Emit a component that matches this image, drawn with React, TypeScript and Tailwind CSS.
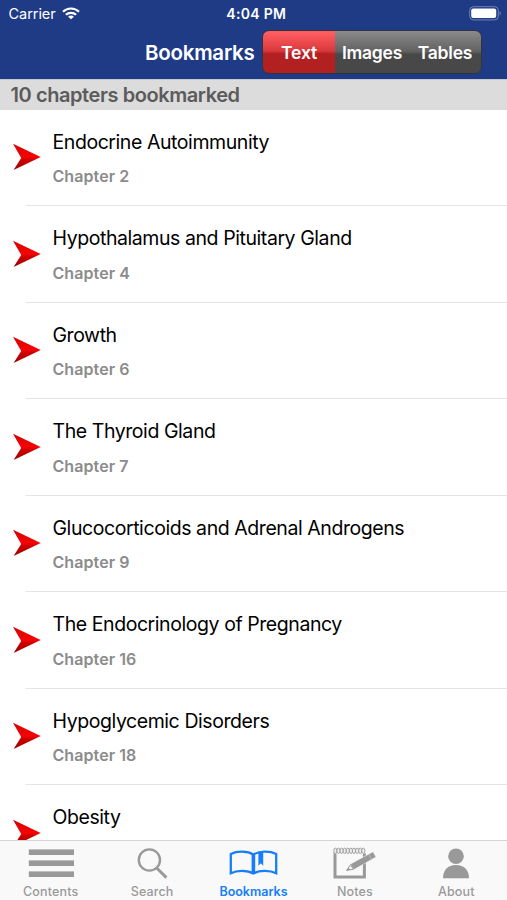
import { clsx } from "clsx";

const chapters = [
  { title: "Endocrine Autoimmunity", chapter: "Chapter 2" },
  { title: "Hypothalamus and Pituitary Gland", chapter: "Chapter 4" },
  { title: "Growth", chapter: "Chapter 6" },
  { title: "The Thyroid Gland", chapter: "Chapter 7" },
  { title: "Glucocorticoids and Adrenal Androgens", chapter: "Chapter 9" },
  { title: "The Endocrinology of Pregnancy", chapter: "Chapter 16" },
  { title: "Hypoglycemic Disorders", chapter: "Chapter 18" },
  { title: "Obesity", chapter: "" },
];

const tabs = [
  { label: "Contents", icon: ContentsIcon },
  { label: "Search", icon: SearchIcon },
  { label: "Bookmarks", icon: BookIcon, active: true },
  { label: "Notes", icon: NotesIcon },
  { label: "About", icon: PersonIcon },
];

const rings = [4, 7.1, 10.2, 13.3, 16.4, 19.5, 22.6, 25.7, 28.8, 31.9];

function WifiIcon() {
  return (
    <svg width="18" height="13" viewBox="0 0 18 13" fill="none" stroke="white" strokeWidth="2.2">
      <path d="M1 4.8C5.4 0.4 12.6 0.4 17 4.8" />
      <path d="M3.9 7.8C6.7 5.1 11.3 5.1 14.1 7.8" />
      <path d="M9 12.3L6.1 9.7C7.7 8.2 10.3 8.2 11.9 9.7Z" fill="white" stroke="none" />
    </svg>
  );
}

function BatteryIcon() {
  return (
    <svg width="33" height="15" viewBox="0 0 33 15">
      <rect x="0.7" y="0.7" width="28.6" height="13.2" rx="3.6" fill="none" stroke="#7482b5" strokeWidth="1" />
      <rect x="2.2" y="2.5" width="25" height="9.6" rx="2" fill="white" />
      <path d="M30.6 5C32.2 5.8 32.2 8.8 30.6 9.6Z" fill="#7482b5" />
    </svg>
  );
}

function ArrowIcon() {
  return (
    <svg width="30" height="28" viewBox="0 0 30 28">
      <defs>
        <linearGradient id="arrow" x1="0" y1="0" x2="0" y2="1">
          <stop offset="0" stopColor="#d90000" />
          <stop offset="0.5" stopColor="#f50505" />
          <stop offset="0.62" stopColor="#cf0000" />
          <stop offset="1" stopColor="#980000" />
        </linearGradient>
      </defs>
      <path d="M1 0.8L28.7 14L1.6 27L9.2 15Z" fill="url(#arrow)" />
    </svg>
  );
}

function ContentsIcon() {
  return (
    <svg width="48" height="34" viewBox="0 0 48 34" fill="#999">
      <rect x="2.8" y="2.4" width="45.2" height="5.6" />
      <rect x="2.8" y="13.4" width="45.2" height="5.6" />
      <rect x="2.8" y="24.4" width="45.2" height="5.6" />
    </svg>
  );
}

function SearchIcon() {
  return (
    <svg width="32" height="34" viewBox="0 0 32 34" fill="none" stroke="#999">
      <circle cx="13.4" cy="13" r="10.6" strokeWidth="2.4" />
      <path d="M20.7 21L30.4 30.6" strokeWidth="3" />
    </svg>
  );
}

function BookIcon() {
  return (
    <svg width="52" height="34" viewBox="0 0 52 34" fill="none" stroke="#157efb" strokeWidth="2.3">
      <path d="M26.4 7.6C20.5 3.8 10 3.8 3.8 7V26.2C10 23 20.5 23 26.4 26.4C32.3 23 43 23 49.2 26.2V7C43 3.8 32.3 3.8 26.4 7.6Z" />
      <path d="M26.4 7.5V26.5" strokeWidth="3.6" />
      <path d="M31.4 5.6H36.2V18.8L33.8 16.2L31.4 18.8Z" fill="#157efb" stroke="none" />
    </svg>
  );
}

function NotesIcon() {
  return (
    <svg width="46" height="34" viewBox="0 0 46 34" fill="none" stroke="#999">
      <path d="M4 5V30H33.4V4" strokeWidth="3" />
      <rect x="2.4" y="0.8" width="33" height="6" rx="2.5" fill="#f8f8f8" stroke="none" />
      {rings.map((x) => (
        <ellipse key={x} cx={x + 0.4} cy="3.8" rx="1.6" ry="2.7" strokeWidth="0.9" fill="#eee" />
      ))}
      <path d="M19.2 17.2L42 4.8L45 10L23 22.6Z" fill="#999" stroke="#f8f8f8" strokeWidth="0.5" />
      <path d="M19.4 17.8L15.6 23.4L22.6 22.2Z" strokeWidth="1" fill="#f0f0f0" />
      <path d="M15.6 23.4L17.6 20.6L19 22.8Z" fill="#999" stroke="none" />
      <path d="M37.8 7.4L40.6 12.6" stroke="#c8c8c8" strokeWidth="0.7" />
    </svg>
  );
}

function PersonIcon() {
  return (
    <svg width="28" height="34" viewBox="0 0 28 34" fill="#999">
      <circle cx="14" cy="9.2" r="7.8" />
      <path d="M1 31.2C1 23.2 5.8 18 14 18S27 23.2 27 31.2Z" />
    </svg>
  );
}

export default function App() {
  return (
    <div className="flex h-[900px] w-[507px] flex-col overflow-hidden bg-white font-['Inter','Liberation_Sans',sans-serif]">
      <header className="h-[79px] shrink-0 bg-[#203b86] text-white">
        <div className="grid h-[27px] grid-cols-3 items-center pl-[8.5px] pr-[5px]">
          <div className="flex items-center gap-[6px]">
            <span className="text-[14.5px] tracking-[-0.05px]">Carrier</span>
            <WifiIcon />
          </div>
          <span className="pl-[2px] text-center text-[14px] font-semibold tracking-[0.3px]">4:04 PM</span>
          <div className="flex justify-end">
            <BatteryIcon />
          </div>
        </div>
        <div className="flex items-start pl-[145px] pt-[3px]">
          <h1 className="w-[117px] pt-[9px] text-[20.5px] font-semibold leading-[28px] tracking-[-0.25px]">Bookmarks</h1>
          <div className="flex h-[44px] w-[220px] overflow-hidden rounded-[7px] border border-[#30343f] text-center text-[17.5px] font-semibold leading-[43px]">
            <button className="w-[72px] bg-linear-to-b from-[#ff5c60] from-5% via-[#d8383b] via-48% to-[#b32022] to-54% tracking-[-0.2px]">
              Text
            </button>
            <button className="w-[74px] bg-linear-to-b from-[#8b8b8b] via-[#626262] via-48% to-[#484848] to-56% tracking-[-0.25px]">
              Images
            </button>
            <button className="flex-1 bg-linear-to-b from-[#8b8b8b] via-[#626262] via-48% to-[#484848] to-56% tracking-[-0.2px]">
              Tables
            </button>
          </div>
        </div>
      </header>

      <h2 className="h-[30.5px] shrink-0 border-t border-[#c4c8d5] bg-[#dcdcdc] pl-[10.5px] text-[20px] font-semibold leading-[30px] tracking-[-0.42px] text-[#5b5b5b]">
        10 chapters bookmarked
      </h2>

      <ul className="min-h-0 flex-1 overflow-hidden">
        {chapters.map((item) => (
          <li key={item.title} className="flex h-[96.5px] pl-3">
            <div className="w-[14px] shrink-0 pt-[33.5px]">
              <ArrowIcon />
            </div>
            <div className="flex-1 border-b border-[#e4e4e6] pl-[26.5px] pt-[18px]">
              <div className="text-[19.5px] leading-[28px] tracking-[-0.43px] text-black">{item.title}</div>
              <div className="pt-[8.75px] text-[16px] font-semibold leading-[24px] tracking-[0.08px] text-[#8b8b8b]">
                {item.chapter}
              </div>
            </div>
          </li>
        ))}
      </ul>

      <nav className="grid h-[60px] shrink-0 grid-cols-5 border-t border-[#d4d4d6] bg-[#f9f9f9]">
        {tabs.map((tab) => (
          <button key={tab.label} className="flex flex-col items-center pr-px pt-[6px]">
            <tab.icon />
            <span
              className={clsx(
                "pl-px text-[12.5px] leading-[22px]",
                tab.active ? "font-semibold text-[#157efb]" : "font-medium tracking-[0.15px] text-[#999]"
              )}
            >
              {tab.label}
            </span>
          </button>
        ))}
      </nav>
    </div>
  );
}
